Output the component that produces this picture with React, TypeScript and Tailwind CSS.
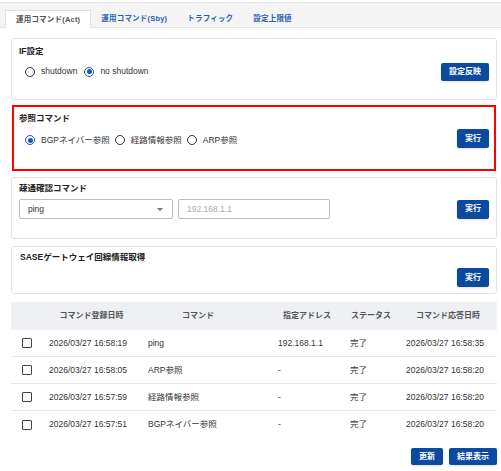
import React from 'react';

const font = { fontFamily: '"Liberation Sans", "Noto Sans CJK JP", sans-serif' };

const tabs = ['運用コマンド(Act)', '運用コマンド(Sby)', 'トラフィック', '設定上限値'];

const rows = [
  { date: '2026/03/27 16:58:19', cmd: 'ping', addr: '192.168.1.1', status: '完了', resp: '2026/03/27 16:58:35' },
  { date: '2026/03/27 16:58:05', cmd: 'ARP参照', addr: '-', status: '完了', resp: '2026/03/27 16:58:20' },
  { date: '2026/03/27 16:57:59', cmd: '経路情報参照', addr: '-', status: '完了', resp: '2026/03/27 16:58:20' },
  { date: '2026/03/27 16:57:51', cmd: 'BGPネイバー参照', addr: '-', status: '完了', resp: '2026/03/27 16:58:20' },
];

const Btn = ({ label, h = 'h-[19px]' }: { label: string; h?: string }) => (
  <button className={`${h} px-[8px] rounded-[2px] bg-[#0c4a9f] text-white text-[8px] font-bold leading-none shadow-sm`}>
    {label}
  </button>
);

const Radio = ({ label, checked }: { label: string; checked?: boolean }) => (
  <label className="flex items-center gap-[6px]">
    <span
      className={`w-[10px] h-[10px] rounded-full border-[1.5px] flex items-center justify-center ${
        checked ? 'border-[#1d58b5]' : 'border-[#333]'
      }`}
    >
      {checked && <span className="w-[5px] h-[5px] rounded-full bg-[#1d58b5]" />}
    </span>
    <span className="text-[8.5px] text-[#333]">{label}</span>
  </label>
);

const Title = ({ children }: { children: React.ReactNode }) => (
  <div className="text-[8.5px] font-bold text-[#222] leading-[12px]">{children}</div>
);

export default function App() {
  return (
    <div className="w-[501px] h-[471px] bg-white overflow-hidden" style={font}>
      {/* Tabs */}
      <div className="mt-[2px] h-[26px] bg-[#f4f4f4] border-t border-b border-[#e4e4e4] flex items-end pl-[5px]">
        {tabs.map((t, i) => (
          <div
            key={t}
            className={`h-[18px] px-[10px] flex items-center text-[7.5px] font-bold tracking-[0.2px] -mb-px ${
              i === 0
                ? 'bg-white border border-b-0 border-[#e0e0e0] text-[#555]'
                : 'text-[#2d5fb0]'
            }`}
          >
            {t}
          </div>
        ))}
      </div>

      <div className="pl-[11px] pr-[4px]">
        {/* IF設定 */}
        <div className="mt-[10px] h-[62px] border border-[#e2e2e2] rounded-[3px] bg-white pl-[7px] pr-[7px] pt-[6px]">
          <Title>IF設定</Title>
          <div className="mt-[5px] h-[19px] flex items-center justify-between">
            <div className="flex items-center gap-[7px] ml-[6px]">
              <Radio label="shutdown" />
              <Radio label="no shutdown" checked />
            </div>
            <Btn label="設定反映" h="h-[18px]" />
          </div>
        </div>

        {/* 参照コマンド */}
        <div className="mt-[5px] mx-[1px] h-[66px] border-2 border-[#f00] bg-white pl-[5px] pr-[5px] pt-[5px]">
          <Title>参照コマンド</Title>
          <div className="mt-[5px] h-[19px] flex items-center justify-between">
            <div className="flex items-center gap-[5px] ml-[6px] mt-[3px]">
              <Radio label="BGPネイバー参照" checked />
              <Radio label="経路情報参照" />
              <Radio label="ARP参照" />
            </div>
            <Btn label="実行" />
          </div>
        </div>

        {/* 疎通確認コマンド */}
        <div className="mt-[6px] h-[62px] border border-[#e2e2e2] rounded-[3px] bg-white pl-[7px] pr-[7px] pt-[4px]">
          <Title>疎通確認コマンド</Title>
          <div className="mt-[5px] flex items-center justify-between">
            <div className="flex items-center gap-[5px]">
              <div className="w-[154px] h-[20px] border border-[#bdbdbd] rounded-[2px] flex items-center justify-between pl-[8px] pr-[9px]">
                <span className="text-[8.5px] text-[#333]">ping</span>
                <span className="w-0 h-0 border-l-[3px] border-r-[3px] border-t-[3px] border-l-transparent border-r-transparent border-t-[#777]" />
              </div>
              <div className="w-[152px] h-[20px] border border-[#bdbdbd] rounded-[2px] flex items-center pl-[8px]">
                <span className="text-[8.5px] text-[#aaa]">192.168.1.1</span>
              </div>
            </div>
            <Btn label="実行" />
          </div>
        </div>

        {/* SASE */}
        <div className="mt-[7px] h-[48px] border border-[#e2e2e2] rounded-[3px] bg-white pl-[8px] pr-[7px] pt-[4px]">
          <Title>SASEゲートウェイ回線情報取得</Title>
          <div className="mt-[5px] flex justify-end">
            <Btn label="実行" />
          </div>
        </div>

        {/* Table */}
        <div className="mt-[8px]">
          <div className="h-[28px] bg-[#eef0f3] grid grid-cols-[31px_99px_130px_72px_56px_1fr] items-center text-[8px] font-bold text-[#555]">
            <div />
            <div className="text-center">コマンド登録日時</div>
            <div className="text-center pr-[16px]">コマンド</div>
            <div className="text-center">指定アドレス</div>
            <div className="text-center">ステータス</div>
            <div className="text-center">コマンド応答日時</div>
          </div>
          {rows.map((r, i) => (
            <div
              key={r.date}
              className={`h-[27px] grid grid-cols-[31px_99px_130px_72px_56px_1fr] items-center text-[8.5px] text-[#333] ${
                i < rows.length - 1 ? 'border-b border-[#e6e6e6]' : ''
              }`}
            >
              <div className="pl-[11px]">
                <span className="block w-[10px] h-[10px] border-[1.5px] border-[#444] rounded-[1px]" />
              </div>
              <div className="pl-[7px]">{r.date}</div>
              <div className="pl-[7px]">{r.cmd}</div>
              <div className="pl-[7px]">{r.addr}</div>
              <div className="pl-[7px]">{r.status}</div>
              <div className="pl-[7px]">{r.resp}</div>
            </div>
          ))}
        </div>

        <div className="mt-[10px] flex justify-end gap-[6px]">
          <Btn label="更新" h="h-[17px]" />
          <Btn label="結果表示" h="h-[17px]" />
        </div>
      </div>
    </div>
  );
}
